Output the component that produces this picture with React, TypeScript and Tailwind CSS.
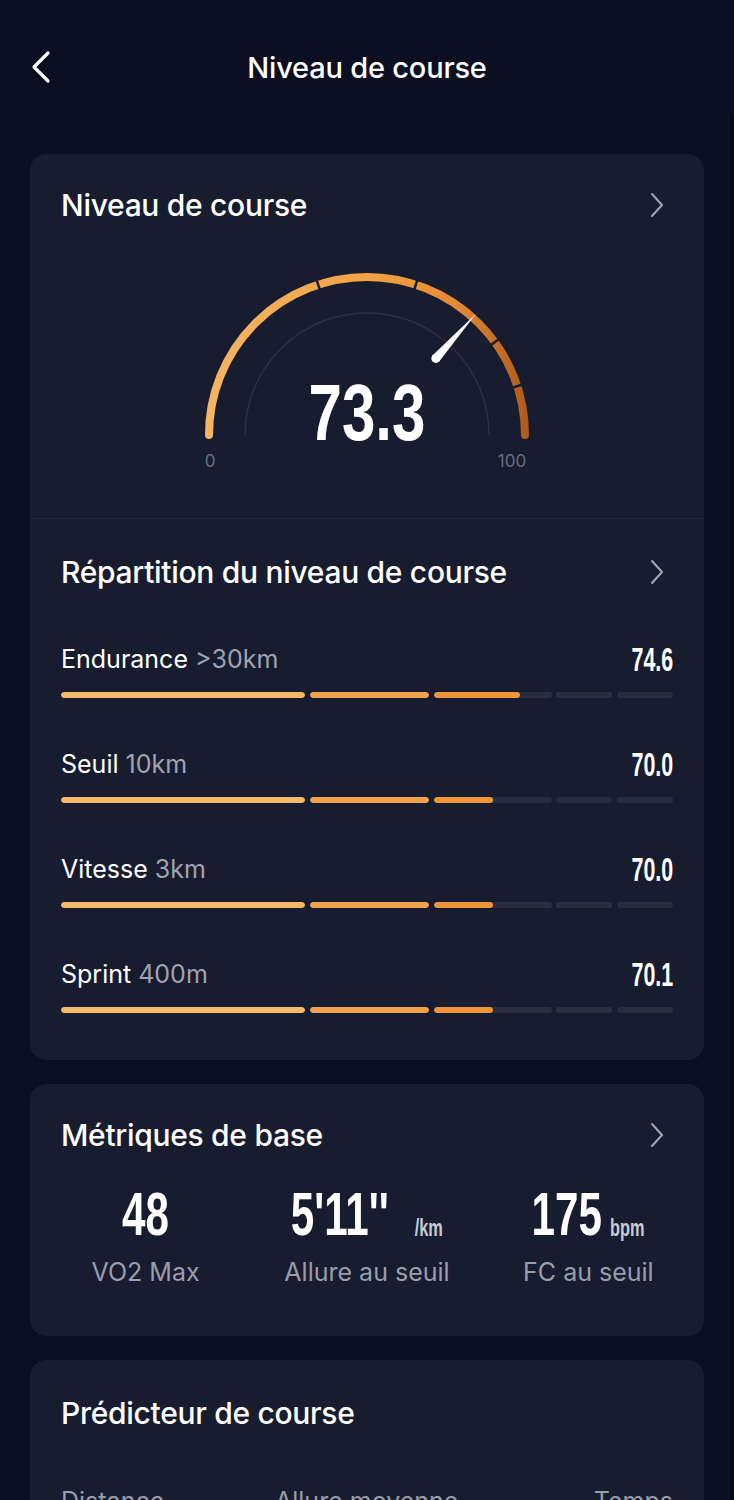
import React from "react";

const SANS = { fontFamily: "Inter, 'Noto Sans', sans-serif" };
const COND = { fontFamily: "'Liberation Sans Narrow', 'Liberation Sans', Roboto, sans-serif" };

type Row = { name: string; sub: string; value: number };

const rows: Row[] = [
  { name: "Endurance", sub: ">30km", value: 74.6 },
  { name: "Seuil", sub: "10km", value: 70.0 },
  { name: "Vitesse", sub: "3km", value: 70.0 },
  { name: "Sprint", sub: "400m", value: 70.1 },
];

const segments = [
  { start: 0, span: 40, flex: "flex-[244]", color: "#f6b86b" },
  { start: 40, span: 20, flex: "flex-[119]", color: "#f2a24a" },
  { start: 60, span: 20, flex: "flex-[118]", color: "#ef963b" },
  { start: 80, span: 10, flex: "flex-[56]", color: "#e3842f" },
  { start: 90, span: 10, flex: "flex-[56]", color: "#cc6f27" },
];

function Chevron() {
  return (
    <svg width="14" height="26" viewBox="0 0 14 26" fill="none">
      <polyline points="2,2 12,13 2,24" stroke="#a3a6b2" strokeWidth="2" strokeLinecap="round" strokeLinejoin="round" />
    </svg>
  );
}

function CardTitle({ title, chevron = true }: { title: string; chevron?: boolean }) {
  return (
    <div className="flex h-[34px] items-center justify-between pl-[31px] pr-[40px]">
      <h2 className="text-[30px] font-medium leading-none tracking-[-0.3px] text-white">{title}</h2>
      {chevron && <Chevron />}
    </div>
  );
}

// gauge geometry
const CX = 180;
const CY = 175;
const polar = (r: number, score: number) => {
  const a = ((180 - score * 1.8) * Math.PI) / 180;
  return [CX + r * Math.cos(a), CY - r * Math.sin(a)];
};
const arc = (r: number, s0: number, s1: number) => {
  const [x0, y0] = polar(r, s0);
  const [x1, y1] = polar(r, s1);
  return `M ${x0} ${y0} A ${r} ${r} 0 0 1 ${x1} ${y1}`;
};

function Gauge({ value }: { value: number }) {
  const R = 158;
  const [bx, by] = polar(103, value);
  const [tx, ty] = polar(163, value);
  const ang = ((180 - value * 1.8) * Math.PI) / 180;
  const px = Math.sin(ang) * 4.5;
  const py = Math.cos(ang) * 4.5;
  return (
    <svg width="360" height="222" viewBox="0 0 360 222" className="mx-auto block">
      <defs>
        <linearGradient id="gArc" x1="20" y1="0" x2="340" y2="0" gradientUnits="userSpaceOnUse">
          <stop offset="0" stopColor="#f5b565" />
          <stop offset="0.5" stopColor="#f2a246" />
          <stop offset="0.78" stopColor="#e48a34" />
          <stop offset="1" stopColor="#ad5b1e" />
        </linearGradient>
      </defs>
      <path d={arc(122, 0, 100)} stroke="#2b3042" strokeWidth="1.5" fill="none" />
      <path d={arc(R, 0, 100)} stroke="url(#gArc)" strokeWidth="8" strokeLinecap="round" fill="none" />
      {[40, 60, 80, 90].map((s) => {
        const [x0, y0] = polar(R - 7, s);
        const [x1, y1] = polar(R + 7, s);
        return <line key={s} x1={x0} y1={y0} x2={x1} y2={y1} stroke="#181c2f" strokeWidth="2.5" />;
      })}
      <path d={`M ${bx + px} ${by + py} L ${tx} ${ty} L ${bx - px} ${by - py} Z`} fill="#ffffff" />
      <circle cx={bx} cy={by} r="4.5" fill="#ffffff" />
      <text
        x={CX}
        y={180}
        textAnchor="middle"
        fontSize="80"
        fontWeight="700"
        fill="#ffffff"
        textLength="117"
        lengthAdjust="spacingAndGlyphs"
        style={COND}
      >
        {value.toFixed(1)}
      </text>
      <text x={23} y={207} textAnchor="middle" fontSize="17" fill="#686d7e" style={SANS}>
        0
      </text>
      <text x={325} y={207} textAnchor="middle" fontSize="17" fill="#686d7e" style={SANS}>
        100
      </text>
    </svg>
  );
}

function LevelBar({ value }: { value: number }) {
  return (
    <div className="flex h-[6px] gap-[4.5px]">
      {segments.map((seg) => {
        const pct = Math.max(0, Math.min(1, (value - seg.start) / seg.span)) * 100;
        return (
          <div key={seg.start} className={`${seg.flex} h-full overflow-hidden rounded-full bg-[#292e3f]`}>
            <div className="h-full rounded-full" style={{ width: `${pct}%`, backgroundColor: seg.color }} />
          </div>
        );
      })}
    </div>
  );
}

function Metric({ value, unit, gap, label }: { value: string; unit?: string; gap?: string; label: string }) {
  return (
    <div className="flex flex-1 flex-col items-center">
      <div className="inline-flex h-[58px] origin-center scale-x-[0.68] items-end" style={COND}>
        <span className="text-[62px] font-bold leading-[62px] text-white">{value}</span>
        {unit && <span className={`${gap} mb-[5px] text-[24px] font-bold leading-none text-[#c9cbd3]`}>{unit}</span>}
      </div>
      <span className="mt-[12px] text-[25px] leading-[30px] text-[#9a9daa]">{label}</span>
    </div>
  );
}

export default function App() {
  return (
    <main className="relative min-h-screen w-[734px] bg-[#0b0f21] pb-10" style={SANS}>
      <header className="relative flex h-[136px] items-center justify-center">
        <button type="button" className="absolute left-[28px] top-[50px]">
          <svg width="26" height="34" viewBox="0 0 26 34" fill="none">
            <polyline points="20,3 6,17 20,31" stroke="#ffffff" strokeWidth="3.2" strokeLinecap="round" strokeLinejoin="round" />
          </svg>
        </button>
        <h1 className="text-[29px] font-medium tracking-[-0.2px] text-white">Niveau de course</h1>
      </header>

      <div className="absolute right-0 top-[115px] h-[1385px] w-[6px] border-l border-[#141a2c] bg-[#070a18]" />

      <div className="flex flex-col gap-[24px] px-[30px] pt-[18px]">
        <section className="rounded-[16px] bg-[#181c2f]">
          <div className="pt-[34px]">
            <CardTitle title="Niveau de course" />
            <div className="mt-[38px] pb-[36px]">
              <Gauge value={73.3} />
            </div>
          </div>
          <div className="h-px bg-[#222739]" />
          <div className="pb-[47px] pt-[36px]">
            <CardTitle title="Répartition du niveau de course" />
            <div className="mt-[55px] flex flex-col gap-[51px] px-[31px]">
              {rows.map((row) => (
                <div key={row.name}>
                  <div className="flex h-[30px] items-center justify-between">
                    <p className="text-[25px] leading-none text-white">
                      {row.name} <span className="text-[#a0a3b0]">{row.sub}</span>
                    </p>
                    <span
                      className="inline-block origin-right scale-x-[0.63] text-[34px] font-bold leading-none text-white"
                      style={COND}
                    >
                      {row.value.toFixed(1)}
                    </span>
                  </div>
                  <div className="mt-[18px]">
                    <LevelBar value={row.value} />
                  </div>
                </div>
              ))}
            </div>
          </div>
        </section>

        <section className="rounded-[16px] bg-[#181c2f] pb-[49px] pt-[34px]">
          <CardTitle title="Métriques de base" />
          <div className="mt-[35px] flex px-[6px]">
            <Metric value="48" label="VO2 Max" />
            <Metric value={"5'11''"} unit="/km" gap="ml-[38px]" label="Allure au seuil" />
            <Metric value="175" unit="bpm" gap="ml-[12px]" label="FC au seuil" />
          </div>
        </section>

        <section className="rounded-[16px] bg-[#181c2f] pb-[40px] pt-[36px]">
          <CardTitle title="Prédicteur de course" chevron={false} />
          <div className="mt-[56px] grid grid-cols-[214px_1fr_auto] px-[31px] text-[25px] leading-[30px] text-[#9a9daa]">
            <span>Distance</span>
            <span>Allure moyenne</span>
            <span>Temps</span>
          </div>
          <div className="mt-[24px] grid grid-cols-[214px_1fr_auto] px-[31px] text-[25px] leading-[30px] text-white">
            <span>5 km</span>
            <span>5'24''/km</span>
            <span>27:00</span>
          </div>
        </section>
      </div>
    </main>
  );
}
